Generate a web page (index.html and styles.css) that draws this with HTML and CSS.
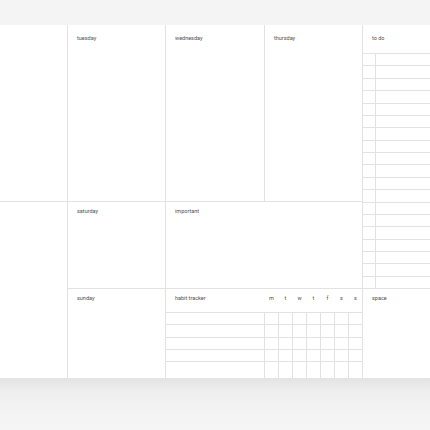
FILE: index.html
```html
<!DOCTYPE html>
<html lang="en">
<head>
  <meta charset="UTF-8">
  <meta name="viewport" content="width=device-width, initial-scale=1.0">
  <title>Weekly planner</title>
  <link rel="stylesheet" href="styles.css">
</head>
<body>

<div class="sheet">
  <div class="cell top">monday</div>
  <div class="cell top">tuesday</div>
  <div class="cell top">wednesday</div>
  <div class="cell top">thursday</div>

  <!-- to do list -->
  <div class="cell todo">
    <div class="todo-title">to do</div>
    <ul class="todo-list">
      <li><span class="box"></span></li>
      <li><span class="box"></span></li>
      <li><span class="box"></span></li>
      <li><span class="box"></span></li>
      <li><span class="box"></span></li>
      <li><span class="box"></span></li>
      <li><span class="box"></span></li>
      <li><span class="box"></span></li>
      <li><span class="box"></span></li>
      <li><span class="box"></span></li>
      <li><span class="box"></span></li>
      <li><span class="box"></span></li>
      <li><span class="box"></span></li>
      <li><span class="box"></span></li>
      <li><span class="box"></span></li>
      <li><span class="box"></span></li>
      <li><span class="box"></span></li>
      <li><span class="box"></span></li>
      <li><span class="box"></span></li>
    </ul>
  </div>

  <div class="cell friday">friday</div>
  <div class="cell">saturday</div>
  <div class="cell important">important</div>
  <div class="cell">sunday</div>

  <!-- habit tracker -->
  <div class="cell habit">
    <div class="habit-title">habit tracker</div>
    <div class="day">m</div>
    <div class="day">t</div>
    <div class="day">w</div>
    <div class="day">t</div>
    <div class="day">f</div>
    <div class="day">s</div>
    <div class="day">s</div>
  </div>

  <div class="cell space">space</div>
</div>

<div class="floor"></div>

<script>
  // righe del tracker: 5 righe x (nome + 7 giorni)
  const habit = document.querySelector('.habit');
  for (let r = 0; r < 5; r++) {
    const nome = document.createElement('div');
    nome.className = 'hc';
    habit.appendChild(nome);
    for (let d = 0; d < 7; d++) {
      const c = document.createElement('div');
      c.className = 'hc d';
      habit.appendChild(c);
    }
  }
</script>

</body>
</html>
```

FILE: styles.css
```css
html, body {
  overflow: hidden;
}

body {
  font-family: 'Roboto', 'Liberation Sans', sans-serif;
  background-color: #f4f4f4;
  margin: 0;
  width: 430px;
  height: 430px;
}

.sheet {
  margin: 25px 0 0 -31px;
  width: 600px;
  height: 353px;
  display: grid;
  grid-template-columns: 98px 97px 98px 97px 1fr;
  grid-template-rows: 176px 86px 89px;
  gap: 1px;
  background-color: #e2e2e2;
  position: relative;
  z-index: 1;
}

.cell {
  background-color: white;
  padding: 6px 9px;
  font-size: 5.5px;
  line-height: 7px;
  color: #505050;
}

.cell.top {
  padding-top: 10px;
}

.friday {
  grid-row: 2 / 4;
  grid-column: 1;
}

.important {
  grid-column: 3 / 5;
}

.todo {
  grid-row: 1 / 3;
  grid-column: 5;
  padding: 0;
  display: flex;
  flex-direction: column;
}

.todo-title {
  height: 28px;
  padding: 10px 9px 0;
  box-sizing: border-box;
}

.todo-list {
  list-style: none;
  margin: 0;
  padding: 0;
  flex: 1;
  display: flex;
  flex-direction: column;
}

.todo-list li {
  flex: 1;
  border-top: 1px solid #e2e2e2;
  display: flex;
}

.todo-list .box {
  width: 12px;
  border-right: 1px solid #e2e2e2;
}

.habit {
  grid-column: 3 / 5;
  padding: 0;
  display: grid;
  grid-template-columns: 98px repeat(7, 14px);
  grid-template-rows: 23px repeat(4, 12.3px) 1fr;
}

.habit-title {
  padding: 6px 9px 0;
}

.day {
  padding-top: 6px;
  text-align: center;
  padding-left: 1px;
}

.hc {
  border-top: 1px solid #e2e2e2;
}

.hc.d {
  border-left: 1px solid #e2e2e2;
}

.floor {
  height: 52px;
  background: linear-gradient(#e3e3e3, #eeeeee 25%, #f3f3f3 60%, #f5f5f5);
}
```
